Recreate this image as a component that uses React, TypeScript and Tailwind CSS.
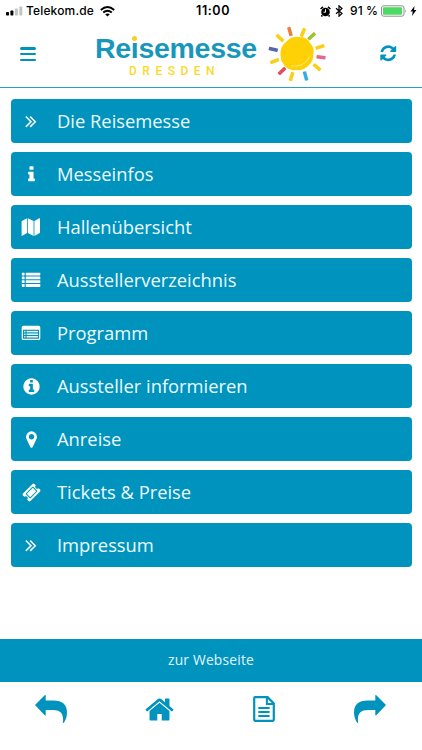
import type { ReactNode } from "react";

type IconProps = { className?: string };

const paths = {
  angles:
    "M979 960q0 13-10 23l-466 466q-10 10-23 10t-23-10l-50-50q-10-10-10-23t10-23l393-393-393-393q-10-10-10-23t10-23l50-50q10-10 23-10t23 10l466 466q10 10 10 23zm384 0q0 13-10 23l-466 466q-10 10-23 10t-23-10l-50-50q-10-10-10-23t10-23l393-393-393-393q-10-10-10-23t10-23l50-50q10-10 23-10t23 10l466 466q10 10 10 23z",
  info: "M1216 1344v128q0 26-19 45t-45 19h-512q-26 0-45-19t-19-45v-128q0-26 19-45t45-19h64v-384h-64q-26 0-45-19t-19-45v-128q0-26 19-45t45-19h384q26 0 45 19t19 45v576h64q26 0 45 19t19 45zm-128-1152v192q0 26-19 45t-45 19h-256q-26 0-45-19t-19-45v-192q0-26 19-45t45-19h256q26 0 45 19t19 45z",
  infoCircle:
    "M1152 1376v-160q0-14-9-23t-23-9h-96v-512q0-14-9-23t-23-9h-320q-14 0-23 9t-9 23v160q0 14 9 23t23 9h96v320h-96q-14 0-23 9t-9 23v160q0 14 9 23t23 9h448q14 0 23-9t9-23zm-128-896v-160q0-14-9-23t-23-9h-192q-14 0-23 9t-9 23v160q0 14 9 23t23 9h192q14 0 23-9t9-23zm640 416q0 209-103 385.5t-279.5 279.5-385.5 103-385.5-103-279.5-279.5-103-385.5 103-385.5 279.5-279.5 385.5-103 385.5 103 279.5 279.5 103 385.5z",
  marker:
    "M1152 640q0-106-75-181t-181-75-181 75-75 181 75 181 181 75 181-75 75-181zm256 0q0 109-33 179l-364 774q-16 33-47.5 52t-67.5 19-67.5-19-46.5-52l-365-774q-33-70-33-179 0-212 150-362t362-150 362 150 150 362z",
  ticket:
    "M1024 452l316 316-572 572-316-316zm-211 979l618-618q19-19 19-45t-19-45l-362-362q-18-18-45-18t-45 18l-618 618q-19 19-19 45t19 45l362 362q18 18 45 18t45-18zm889-637l-907 908q-37 37-90.5 37t-90.5-37l-126-126q56-56 56-136t-56-136-136-56-136 56l-125-126q-37-37-37-90.5t37-90.5l907-906q37-37 90.5-37t90.5 37l125 125q-56 56-56 136t56 136 136 56 136-56l126 125q37 37 37 90.5t-37 90.5z",
  refresh:
    "M1639 1056q0 5-1 7-64 268-268 434.5t-478 166.5q-146 0-282.5-55t-243.5-157l-129 129q-19 19-45 19t-45-19-19-45v-448q0-26 19-45t45-19h448q26 0 45 19t19 45-19 45l-137 137q71 66 161 102t187 36q134 0 250-65t186-179q11-17 53-117 8-23 30-23h192q13 0 22.5 9.5t9.5 22.5zm25-800v448q0 26-19 45t-45 19h-448q-26 0-45-19t-19-45 19-45l138-138q-148-137-349-137-134 0-250 65t-186 179q-11 17-53 117-8 23-30 23h-199q-13 0-22.5-9.5t-9.5-22.5v-7q65-268 270-434.5t480-166.5q146 0 284 55.5t245 156.5l130-129q19-19 45-19t45 19 19 45z",
  home: "M1472 992v480q0 26-19 45t-45 19h-384v-384h-256v384h-384q-26 0-45-19t-19-45v-480q0-1 .5-3t.5-3l575-474 575 474q1 2 1 6zm223-69l-62 74q-8 9-21 11h-3q-13 0-21-7l-692-577-692 577q-12 8-24 7-13-2-21-11l-62-74q-8-10-7-23.5t11-21.5l719-599q32-26 76-26t76 26l244 204v-195q0-14 9-23t23-9h192q14 0 23 9t9 23v408l219 182q10 8 11 21.5t-7 23.5z",
};

function Icon({ name, className }: { name: keyof typeof paths; className?: string }) {
  return (
    <svg viewBox="0 0 1792 1792" fill="currentColor" className={className}>
      <path d={paths[name]} />
    </svg>
  );
}

function MapIcon() {
  return (
    <svg viewBox="0 0 20 20" fill="currentColor" className="h-5 w-5">
      <path d="M.9 4.1 6 1.2v14.9L1.3 18.8q-.7.3-.7-.4V4.6q0-.3.3-.5ZM6.8 1.2l5.8 2.9v14.8L6.8 16ZM13.4 4l4.9-2.7q.7-.3.7.4v13.8q0 .3-.3.5l-5.3 2.9Z" />
    </svg>
  );
}

function ListIcon() {
  return (
    <svg viewBox="0 0 20 20" fill="currentColor" className="h-5 w-5">
      {[2.7, 6.5, 10.3, 14.1].map((y) => (
        <g key={y}>
          <rect x="0.8" y={y} width="2.8" height="2.8" rx="0.4" />
          <rect x="4.7" y={y} width="14.6" height="2.8" rx="0.4" />
        </g>
      ))}
    </svg>
  );
}

function ListAltIcon() {
  return (
    <svg viewBox="0 0 20 20" fill="currentColor" className="h-5 w-5">
      <path
        fillRule="evenodd"
        d="M2.4 2.7h15.2q1.7 0 1.7 1.7v11q0 1.7-1.7 1.7H2.4q-1.7 0-1.7-1.7v-11q0-1.7 1.7-1.7ZM2 6.7v8.6q0 .5.5.5h15q.5 0 .5-.5V6.7Z"
      />
      {[7.9, 10.5, 13.1].map((y) => (
        <g key={y}>
          <rect x="3.2" y={y} width="1.3" height="1.4" />
          <rect x="5.6" y={y} width="11.3" height="1.4" />
        </g>
      ))}
    </svg>
  );
}

function FileIcon() {
  return (
    <svg viewBox="0 0 22 26" fill="none" stroke="currentColor" className="h-[26px] w-[22px]">
      <path d="M2 1.2h12.600l6.200 6.200v16.400q0 1-1 1H2q-.8 0-.8-1V2.200q0-1 .8-1Z" strokeWidth="2.2" />
      <path d="M13.900 1.500v6.500h6.700" strokeWidth="2" />
      <path d="M5.300 12h11.300M5.300 16h11.300M5.300 20h11.300" strokeWidth="1.900" />
    </svg>
  );
}

function BackArrow({ className }: IconProps) {
  return (
    <svg viewBox="0 0 32 28" fill="currentColor" className={className}>
      <path d="M0 10 9.700.2q1-.6 1 .4v4.900h7.500C27.500 5.500 32 9.500 32 17.500q0 6-3.400 10.500-.7.3-.7-.5C29 18.500 25.500 14.900 18 14.900h-7.300v4.900q0 1.200-1 .5Z" />
    </svg>
  );
}

function Sun() {
  const rays = [
    { x: 27, y: 9.5, r: -16, c: "#ee7d3b" },
    { x: 40, y: 10.5, r: 22, c: "#fbd014" },
    { x: 48.7, y: 14.3, r: 48, c: "#9cc52d" },
    { x: 57, y: 25, r: 72, c: "#fbd014" },
    { x: 58, y: 35.3, r: 98, c: "#e6678e" },
    { x: 54, y: 45.3, r: 130, c: "#fbd014" },
    { x: 42.5, y: 54, r: 165, c: "#35aede" },
    { x: 28.5, y: 54.5, r: 197, c: "#fbd014" },
    { x: 19, y: 49, r: 226, c: "#e54b59" },
    { x: 11.5, y: 39, r: 248, c: "#fbd014" },
    { x: 10.3, y: 27.3, r: 283, c: "#5266b0" },
    { x: 17, y: 16, r: 312, c: "#fbd014" },
  ];
  return (
    <svg viewBox="0 0 64 62" className="h-[62px] w-16">
      {rays.map((ray) => (
        <rect
          key={ray.r}
          x="-1.8"
          y="-4.6"
          width="3.5"
          height="9.2"
          rx="0.6"
          fill={ray.c}
          transform={`translate(${ray.x} ${ray.y}) rotate(${ray.r})`}
        />
      ))}
      <path
        fill="#fed006"
        d="M24 19q5-5 12-4 8-.5 11 6 4.500 4 3.500 11 0 7-4.500 11-5 6-12 5-9 1-13-5-4-5-3.500-12 0-7 6.500-12Z"
      />
      <path d="M28 44q13 2 19-10" fill="none" stroke="#ffe36a" strokeWidth="0.9" />
      <path d="M32 44q9 0 14-8" fill="none" stroke="#ffe681" strokeWidth="0.6" />
    </svg>
  );
}

function StatusBar() {
  return (
    <div className="flex h-[22px] items-center font-['Inter'] text-black">
      <svg viewBox="0 0 17 10" className="ml-[6px] h-[10px] w-[17px]">
        <rect x="0" y="6" width="3" height="3.5" rx="0.7" />
        <rect x="4.4" y="4.5" width="3" height="5" rx="0.7" />
        <rect x="8.9" y="2.5" width="3" height="7" rx="0.7" fill="#c4c4c4" />
        <rect x="13.3" y="0.5" width="3" height="9" rx="0.7" fill="#c4c4c4" />
      </svg>
      <span className="ml-[3px] w-[68px] text-[12px] font-medium tracking-[0.15px] whitespace-nowrap">
        Telekom.de
      </span>
      <svg viewBox="0 0 15 11" fill="none" stroke="black" className="ml-[6px] h-[11px] w-[15px]">
        <path d="M.8 4Q7.500-1.800 14.200 4M3.200 6.500q4.300-3.700 8.600 0" strokeWidth="1.9" />
        <path d="M7.500 10.600 5.200 8.300q2.300-1.700 4.600 0Z" fill="black" stroke="none" />
      </svg>
      <span className="ml-[81px] w-9 text-[12.5px] font-semibold tracking-[0.6px] whitespace-nowrap">
        11:00
      </span>
      <svg viewBox="0 0 11 11" className="ml-[88px] h-[11px] w-[11px]">
        <circle cx="5.5" cy="6" r="4.3" />
        <path d="M.6 3 3 .9M10.400 3 8 .9M2.300 9.200l-.9 1.300M8.700 9.200l.9 1.300" stroke="black" strokeWidth="1.6" />
        <path d="M5.500 3.300v2.900h-2" fill="none" stroke="white" strokeWidth="1" />
      </svg>
      <svg viewBox="0 0 8 12" fill="none" stroke="black" className="ml-1 h-3 w-2">
        <path d="m1 3.300 6 5.200-3 2.700V.8l3 2.700-6 5.200" strokeWidth="1.2" />
      </svg>
      <span className="ml-[7px] w-[28px] text-[12px] font-medium tracking-[0.1px] whitespace-nowrap">
        91 %
      </span>
      <svg viewBox="0 0 27 12" className="ml-[3px] h-3 w-[27px]">
        <rect x="0.5" y="0.8" width="22.5" height="10.4" rx="2.2" fill="white" stroke="#8f8f8f" />
        <rect x="2" y="2.2" width="19" height="7.6" rx="0.9" fill="#4cd964" />
        <path d="M24.400 4.200q1.800 1.800 0 3.600Z" fill="#8f8f8f" />
      </svg>
      <svg viewBox="0 0 7 10" className="ml-[2px] h-[10px] w-[7px]">
        <path d="M4.500 0 .5 5.600h2.300L2 10l4.400-5.900H4Z" />
      </svg>
    </div>
  );
}

const menu: { label: string; icon: ReactNode }[] = [
  { label: "Die Reisemesse", icon: <Icon name="angles" className="h-5 w-5" /> },
  { label: "Messeinfos", icon: <Icon name="info" className="h-[19px] w-[19px]" /> },
  { label: "Hallenübersicht", icon: <MapIcon /> },
  { label: "Ausstellerverzeichnis", icon: <ListIcon /> },
  { label: "Programm", icon: <ListAltIcon /> },
  { label: "Aussteller informieren", icon: <Icon name="infoCircle" className="h-[19px] w-[19px]" /> },
  { label: "Anreise", icon: <Icon name="marker" className="h-[19px] w-[19px]" /> },
  { label: "Tickets & Preise", icon: <Icon name="ticket" className="h-[19px] w-[19px]" /> },
  { label: "Impressum", icon: <Icon name="angles" className="h-5 w-5" /> },
];

export default function App() {
  return (
    <div className="flex h-[750px] w-[422px] flex-col overflow-hidden bg-white font-['Open_Sans',sans-serif] text-[#0093bd]">
      <StatusBar />

      <header className="flex h-[65px]">
        <button className="mt-[25px] ml-5 flex h-[14px] w-4 flex-col justify-between">
          <span className="h-[2.5px] w-full rounded-sm bg-current" />
          <span className="h-[2.5px] w-full rounded-sm bg-current" />
          <span className="h-[2.5px] w-full rounded-sm bg-current" />
        </button>

        <div className="mt-[9px] ml-[59px] w-[163px] font-['Liberation_Sans']">
          <div className="text-[28.5px] leading-[34px] font-bold tracking-[-0.3px] text-[#1897bb]">
            Re
            <span className="relative">
              i
              <span className="absolute top-[3px] left-[1px] h-[7px] w-[6px] bg-white" />
              <span className="absolute top-[4px] left-[1.5px] h-[4.5px] w-[4.5px] rounded-full bg-[#fbd01c]" />
            </span>
            semesse
          </div>
          <div className="ml-[34px] font-['Roboto'] text-[12px] leading-[12px] font-medium tracking-[5.5px] text-[#fbd92c]">
            DRESDEN
          </div>
        </div>

        <div className="ml-[5px]">
          <Sun />
        </div>

        <button className="mt-[22px] ml-[52px] h-[18px]">
          <Icon name="refresh" className="h-[18.5px] w-[18.5px]" />
        </button>
      </header>
      <div className="h-px bg-[#2c9fbd]" />

      <main className="flex flex-1 flex-col gap-[9px] px-[10.5px] pt-[11px]">
        {menu.map((item) => (
          <a
            key={item.label}
            className="flex h-11 items-center rounded-[4px] bg-[#0093bd] text-[18.35px] text-[#edfaff]"
          >
            <span className="ml-[10px] flex w-[21px] justify-center text-white">{item.icon}</span>
            <span className="ml-[15.5px] whitespace-nowrap">{item.label}</span>
          </a>
        ))}
      </main>

      <a className="flex h-[43px] items-center justify-center bg-[#0093bd] text-[13.8px] tracking-[0.2px] text-[#e2f6fc]">
        zur Webseite
      </a>

      <nav className="flex h-[68px]">
        <span className="mt-[13px] ml-[35px]">
          <BackArrow className="h-[28px] w-8" />
        </span>
        <span className="mt-[12px] ml-[77px]">
          <Icon name="home" className="h-[31px] w-[31px]" />
        </span>
        <span className="mt-[14px] ml-[78px]">
          <FileIcon />
        </span>
        <span className="mt-[13px] ml-[79px]">
          <BackArrow className="h-[28px] w-8 -scale-x-100" />
        </span>
      </nav>
    </div>
  );
}
